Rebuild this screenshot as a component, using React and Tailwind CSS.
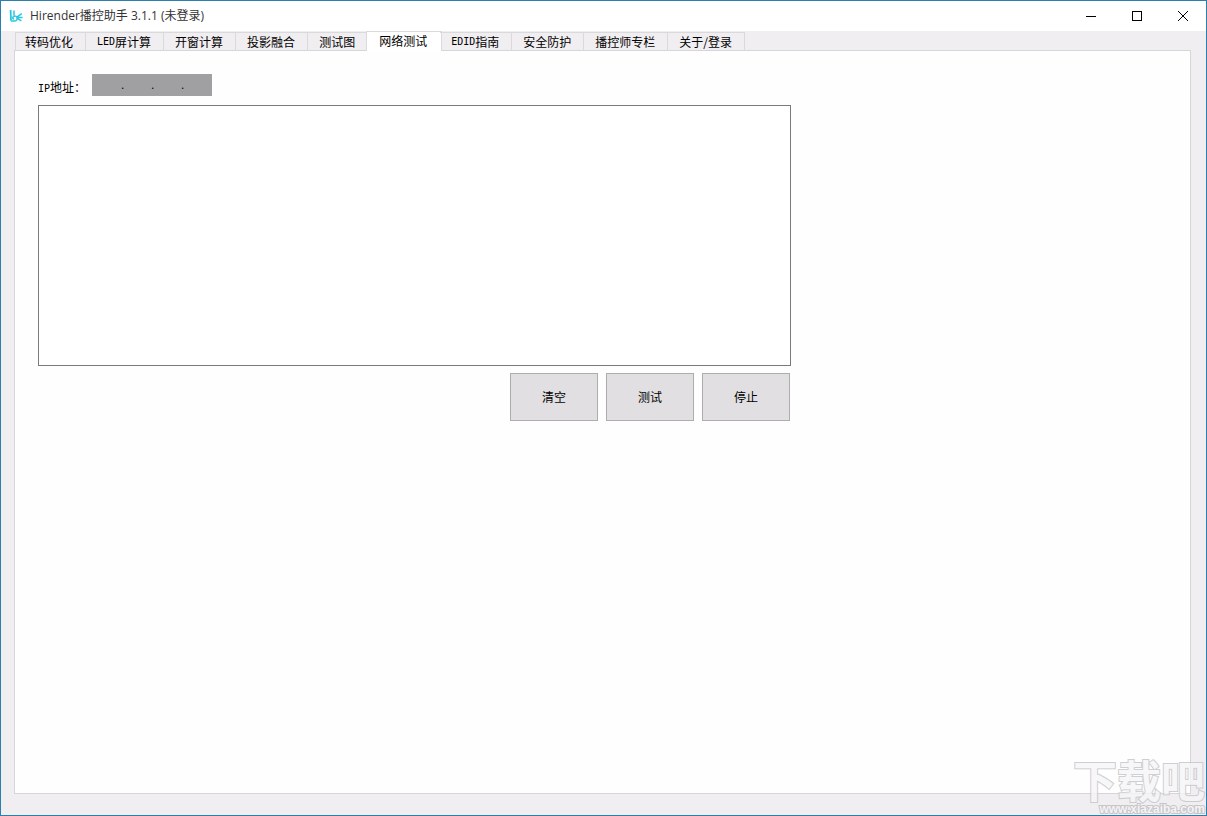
import React from 'react';

const tabs = [
  { label: '转码优化' },
  { latin: 'LED', label: '屏计算' },
  { label: '开窗计算' },
  { label: '投影融合' },
  { label: '测试图' },
  { label: '网络测试' },
  { latin: 'EDID', label: '指南' },
  { label: '安全防护' },
  { label: '播控师专栏' },
  { label: '关于/登录' },
];
const activeTab = '网络测试';

const Logo = () => (
  <svg viewBox="0 0 14 14" className="size-3.5" fill="none" stroke="#2ac6e0" aria-hidden="true">
    <path d="M1.6 1l.4 10.6" strokeWidth="1.8" />
    <path d="M5 1.6v4.8" strokeWidth="1.5" />
    <path d="M2 12h3.4c2.4 0 3.2-2 2.6-3.6-.5-1.4-2.6-1.8-3.8-.6-.9 1-.4 2.4 1 2.2" strokeWidth="1.5" />
    <path d="M7.8 8.2l5-3.6M8.2 8.6h5.4M8 9.2l4.4 2.6" strokeWidth="1.5" />
  </svg>
);

const Latin = ({ children }) => (
  <span className="font-['DejaVu_Sans_Mono',monospace] text-[10px]">{children}</span>
);

const CaptionButton = ({ label, children }) => (
  <button type="button" aria-label={label} className="flex w-[46px] items-center justify-center">
    <svg viewBox="0 0 12 12" className="size-3" fill="none" stroke="#000" aria-hidden="true">
      {children}
    </svg>
  </button>
);

const TitleBar = () => (
  <header className="flex h-[30px] bg-white">
    <div className="flex flex-1 items-center gap-[7px] pl-2">
      <Logo />
      <h1 className="font-['Open_Sans','Noto_Sans_CJK_SC',sans-serif] text-xs text-[#333]">
        Hirender播控助手 3.1.1 (未登录)
      </h1>
    </div>
    <CaptionButton label="最小化">
      <path d="M1 6.5h10" />
    </CaptionButton>
    <CaptionButton label="最大化">
      <rect x="1.5" y="1.5" width="9" height="9" />
    </CaptionButton>
    <CaptionButton label="关闭">
      <path d="M1 1l10 10M11 1L1 11" />
    </CaptionButton>
  </header>
);

const Tab = ({ latin, label }) => {
  const active = label === activeTab;
  return (
    <button
      type="button"
      role="tab"
      aria-selected={active}
      className={
        active
          ? '-mx-0.5 -mb-px flex h-5 items-center border border-b-0 border-[#dad9db] bg-white pr-3.5 pb-px pl-3'
          : 'flex h-[18px] items-center border-t border-r border-[#dad9db] px-3 pl-[11px] first:border-l first:pl-[9px]'
      }
    >
      {latin && <Latin>{latin}</Latin>}
      {label}
    </button>
  );
};

const Octet = ({ index }) => (
  <input
    type="text"
    inputMode="numeric"
    maxLength={3}
    aria-label={`IP地址 ${index}`}
    className="w-[27px] text-center outline-none"
  />
);

const IpField = () => (
  <div role="group" aria-labelledby="ip-label" className="flex h-[22px] w-[120px] items-center bg-[#a09fa1] pl-0.5 font-['Liberation_Sans',sans-serif]">
    <Octet index={1} />
    <span className="w-[3px]">.</span>
    <Octet index={2} />
    <span className="w-[3px]">.</span>
    <Octet index={3} />
    <span className="w-[3px]">.</span>
    <Octet index={4} />
  </div>
);

const ActionButton = ({ children }) => (
  <button type="button" className="h-12 w-[88px] border border-[#adadad] bg-[#e1dfe2]">
    {children}
  </button>
);

const NetworkTest = () => (
  <div className="max-w-[776px] pt-[23px] pl-[23px]">
    <div className="flex items-center gap-1.5">
      <span id="ip-label" className="pt-1">
        <Latin>IP</Latin>地址：
      </span>
      <IpField />
    </div>
    <textarea
      aria-label="测试结果"
      readOnly
      className="mt-[9px] block h-[261px] w-full resize-none border border-[#7a7a7c] bg-white outline-none"
    />
    <div className="mt-[7px] flex justify-end gap-2 pr-px">
      <ActionButton>清空</ActionButton>
      <ActionButton>测试</ActionButton>
      <ActionButton>停止</ActionButton>
    </div>
  </div>
);

const Watermark = () => (
  <div className="pointer-events-none absolute right-px bottom-0 flex flex-col items-end font-bold text-[#f6f5f7] opacity-80 [paint-order:stroke]">
    <span className="mb-0.5 font-['Noto_Sans_CJK_SC',sans-serif] text-[44px] leading-11 [-webkit-text-stroke:2px_#c4c3c5]">下载吧</span>
    <span className="font-['Liberation_Sans',sans-serif] text-xs leading-3 [-webkit-text-stroke:2px_#bdbcbe]">www.xiazaiba.com</span>
  </div>
);

export default function App() {
  return (
    <div className="relative flex min-h-screen flex-col overflow-hidden border border-[#2a7fae] bg-[#f0eef1] font-['Noto_Sans_CJK_SC',sans-serif] text-xs text-black">
      <TitleBar />
      <main className="flex flex-1 flex-col pr-[15px] pb-[21px] pl-[13px]">
        <div role="tablist" className="relative flex h-[19px] items-end pl-px whitespace-nowrap">
          {tabs.map(tab => (
            <Tab key={tab.label} {...tab} />
          ))}
        </div>
        <section role="tabpanel" className="flex-1 border border-[#d6d5d7] bg-[#fefefe]">
          <NetworkTest />
        </section>
      </main>
      <Watermark />
    </div>
  );
}
